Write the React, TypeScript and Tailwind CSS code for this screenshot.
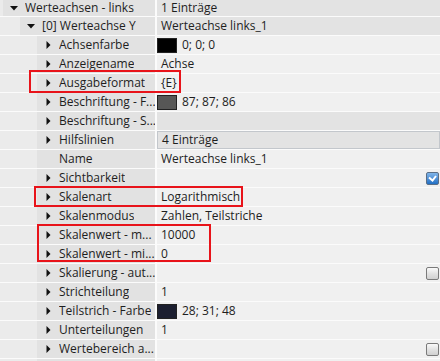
import React from 'react';

type Row = {
  name: string;
  level: number;
  arrow?: 'down' | 'right';
  value?: string;
  swatch?: string;
  check?: boolean;
  dark?: boolean;
  focus?: boolean;
};

const rows: Row[] = [
  { name: 'Werteachsen - links', level: 0, arrow: 'down', value: '1 Einträge', dark: true },
  { name: '[0] Werteachse Y', level: 1, arrow: 'down', value: 'Werteachse links_1', dark: true },
  { name: 'Achsenfarbe', level: 2, arrow: 'right', value: '0; 0; 0', swatch: '#000000' },
  { name: 'Anzeigename', level: 2, arrow: 'right', value: 'Achse' },
  { name: 'Ausgabeformat', level: 2, arrow: 'right', value: '{E}' },
  { name: 'Beschriftung - F...', level: 2, arrow: 'right', value: '87; 87; 86', swatch: '#575756' },
  { name: 'Beschriftung - S...', level: 2, arrow: 'right', dark: true },
  { name: 'Hilfslinien', level: 2, arrow: 'right', value: '4 Einträge', dark: true, focus: true },
  { name: 'Name', level: 2, value: 'Werteachse links_1' },
  { name: 'Sichtbarkeit', level: 2, arrow: 'right', check: true },
  { name: 'Skalenart', level: 2, arrow: 'right', value: 'Logarithmisch' },
  { name: 'Skalenmodus', level: 2, arrow: 'right', value: 'Zahlen, Teilstriche' },
  { name: 'Skalenwert - m...', level: 2, arrow: 'right', value: '10000' },
  { name: 'Skalenwert - mi...', level: 2, arrow: 'right', value: '0' },
  { name: 'Skalierung - aut...', level: 2, arrow: 'right', check: false },
  { name: 'Strichteilung', level: 2, arrow: 'right', value: '1' },
  { name: 'Teilstrich - Farbe', level: 2, arrow: 'right', value: '28; 31; 48', swatch: '#1c1f30' },
  { name: 'Unterteilungen', level: 2, arrow: 'right', value: '1' },
  { name: 'Wertebereich a...', level: 2, arrow: 'right', check: false },
  { name: '', level: 2 },
];

const indents = ['w-[3px]', 'w-[20px]', 'w-[37px]'];

function Arrow({ dir }: { dir: 'down' | 'right' }) {
  return dir === 'down' ? (
    <svg width="8" height="5" viewBox="0 0 8 5" className="shrink-0">
      <path d="M0 0h8L4 4.5z" fill="#111" />
    </svg>
  ) : (
    <svg width="5" height="8" viewBox="0 0 5 8" className="shrink-0">
      <path d="M0.5 0v8L4.5 4z" fill="#111" />
    </svg>
  );
}

function Check({ on }: { on: boolean }) {
  return on ? (
    <span className="flex h-[13px] w-[13px] items-center justify-center rounded-[2px] border border-[#5a6e86] bg-gradient-to-b from-[#7fb4e8] to-[#1f6fc4]">
      <svg width="9" height="7" viewBox="0 0 9 7">
        <path d="M1 2.5l3.5 3L8 1" stroke="#fff" strokeWidth="2" fill="none" />
      </svg>
    </span>
  ) : (
    <span className="block h-[13px] w-[13px] rounded-[2px] border border-[#7a7a7a] bg-gradient-to-b from-[#fafafa] via-[#e2e2e2] to-[#d0d0d0]" />
  );
}

export default function App() {
  return (
    <div
      className="relative h-[361px] w-[440px] overflow-hidden bg-[#f0f0f0] text-[12px] text-[#1e1e1e]"
      style={{ fontFamily: '"Open Sans", "Noto Sans", sans-serif' }}
    >
      <div className="flex flex-col">
        {rows.map((r, i) => (
          <div
            key={i}
            className={`flex border-b border-[#fbfbfb] ${i === 0 ? 'h-[17px]' : 'h-[19px]'}`}
          >
            <div className="flex w-[155px] shrink-0 bg-[#ebebeb]">
              <div className={`${indents[r.level]} shrink-0`} />
              <div className="flex min-w-0 flex-1 items-center bg-[#e2e2e2]">
                <div className="flex w-[22px] shrink-0 items-center justify-center">
                  {r.arrow && <Arrow dir={r.arrow} />}
                </div>
                <span className="overflow-hidden whitespace-nowrap leading-[16px]">{r.name}</span>
              </div>
            </div>
            <div className="w-[2px] shrink-0 bg-[#fbfbfb]" />
            <div
              className={`flex min-w-0 flex-1 items-center gap-[5px] pl-[4px] pr-[1px] ${
                r.dark ? 'bg-[#e3e3e3]' : 'bg-[#f0f0f0]'
              } ${r.focus ? 'border border-[#c3c7cc] pl-[3px]' : ''}`}
            >
              {r.swatch && (
                <span
                  className="-ml-[4px] block h-[15px] w-[20px] shrink-0 border border-[#222]"
                  style={{ backgroundColor: r.swatch }}
                />
              )}
              {r.value && <span className="whitespace-nowrap leading-[16px]">{r.value}</span>}
              {r.check !== undefined && (
                <span className="ml-auto">
                  <Check on={r.check} />
                </span>
              )}
            </div>
          </div>
        ))}
      </div>

      {/* Markierungen */}
      <div className="pointer-events-none absolute left-[29px] top-[70px] h-[23px] w-[152px] border-2 border-[#e8131a]" />
      <div className="pointer-events-none absolute left-[34px] top-[186px] h-[21px] w-[209px] border-2 border-[#e8131a]" />
      <div className="pointer-events-none absolute left-[37px] top-[224px] h-[38px] w-[174px] border-2 border-[#e8131a]" />
    </div>
  );
}
